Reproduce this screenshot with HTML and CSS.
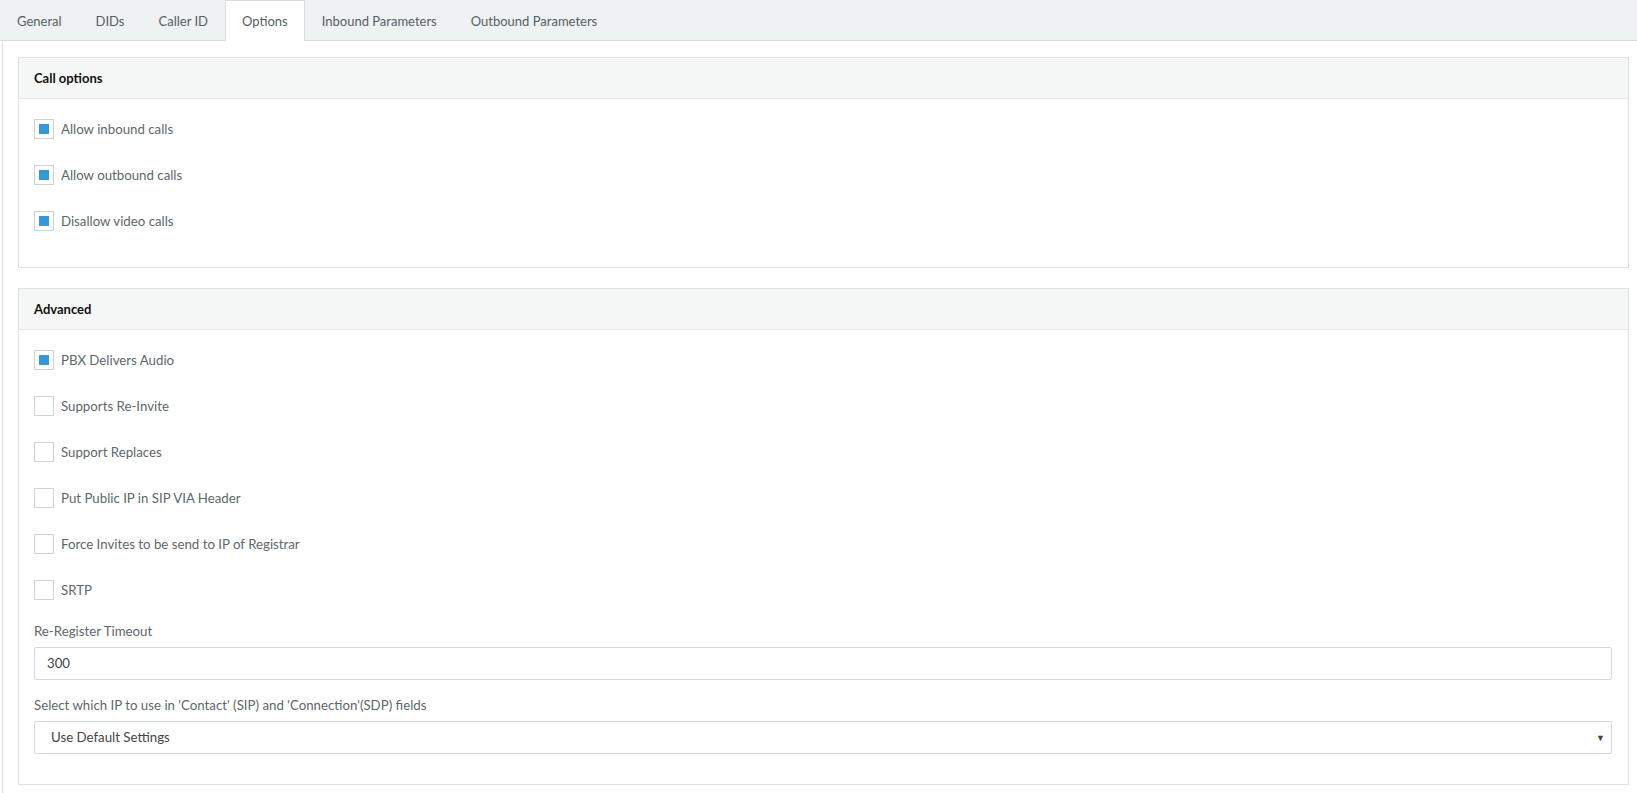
FILE: index.html
```html
<!DOCTYPE html>
<html>
<head>
<meta charset="utf-8">
<link rel="stylesheet" href="styles.css">
</head>
<body>
<div class="tabs">
  <div class="tab">General</div>
  <div class="tab">DIDs</div>
  <div class="tab">Caller ID</div>
  <div class="tab active">Options</div>
  <div class="tab">Inbound Parameters</div>
  <div class="tab">Outbound Parameters</div>
</div>
<div class="content">
  <div class="card">
    <div class="card-head">Call options</div>
    <div class="card-body">
      <div class="check"><span class="box on"></span><span class="lbl">Allow inbound calls</span></div>
      <div class="check"><span class="box on"></span><span class="lbl">Allow outbound calls</span></div>
      <div class="check"><span class="box on"></span><span class="lbl">Disallow video calls</span></div>
    </div>
  </div>
  <div class="card">
    <div class="card-head">Advanced</div>
    <div class="card-body adv">
      <div class="check"><span class="box on"></span><span class="lbl">PBX Delivers Audio</span></div>
      <div class="check"><span class="box"></span><span class="lbl">Supports Re-Invite</span></div>
      <div class="check"><span class="box"></span><span class="lbl">Support Replaces</span></div>
      <div class="check"><span class="box"></span><span class="lbl">Put Public IP in SIP VIA Header</span></div>
      <div class="check"><span class="box"></span><span class="lbl">Force Invites to be send to IP of Registrar</span></div>
      <div class="check last"><span class="box"></span><span class="lbl">SRTP</span></div>
      <div class="field">
        <div class="flabel">Re-Register Timeout</div>
        <div class="input">300</div>
      </div>
      <div class="field">
        <div class="flabel">Select which IP to use in 'Contact' (SIP) and 'Connection'(SDP) fields</div>
        <div class="select"><span>Use Default Settings</span><span class="arrow">&#9660;</span></div>
      </div>
    </div>
  </div>
</div>
</body>
</html>
```

FILE: styles.css
```css
html, body {
  margin: 0;
  padding: 0;
  background: #ffffff;
  font-family: Lato, "Open Sans", sans-serif;
  font-size: 13.25px;
  color: #5d676b;
}
.tabs {
  display: flex;
  height: 40px;
  background: #eef2f3;
  border-bottom: 1px solid #d8dee0;
  padding-left: 0;
  align-items: flex-end;
}
.tab {
  height: 39px;
  line-height: 40px;
  padding: 0 16px;
  font-size: 13px;
  color: #555f63;
  border: 1px solid transparent;
  border-bottom: none;
}
.tab.active {
  background: #ffffff;
  border-color: #d8dee0;
  height: 40px;
  margin-bottom: -1px;
  line-height: 40px;
}
.content {
  margin-left: 2px;
  border-left: 1px solid #d8dee0;
  padding: 16px 8px 10px 15px;
}
.card {
  border: 1px solid #dde3e5;
  margin-bottom: 20px;
  background: #fff;
}
.card-head {
  height: 40px;
  line-height: 40px;
  background: #f5f6f6;
  border-bottom: 1px solid #e6e9ea;
  padding-left: 15px;
  font-weight: bold;
  font-size: 13px;
  color: #111;
}
.card-body {
  padding: 20px 16px 10px 15px;
}
.card-body.adv {
  padding-bottom: 30px;
}
.check {
  display: flex;
  align-items: center;
  height: 20px;
  margin-bottom: 26px;
}
.check.last {
  margin-bottom: 22px;
}
.box {
  width: 18px;
  height: 18px;
  border: 1px solid #ccd4d7;
  background: #fff;
  display: flex;
  align-items: center;
  justify-content: center;
  margin-right: 7px;
}
.box.on::after {
  content: "";
  width: 10px;
  height: 10px;
  background: #3498db;
}
.lbl {
  color: #5d676b;
}
.field + .field {
  margin-top: 16px;
}
.flabel {
  line-height: 18px;
  margin-bottom: 7px;
}
.input, .select {
  height: 31px;
  border: 1px solid #d3dadd;
  border-radius: 2px;
  line-height: 31px;
  color: #444;
}
.input {
  padding-left: 12px;
}
.select {
  padding-left: 16px;
  padding-right: 6px;
  display: flex;
  justify-content: space-between;
}
.arrow {
  font-size: 9px;
  color: #444;
}
```
